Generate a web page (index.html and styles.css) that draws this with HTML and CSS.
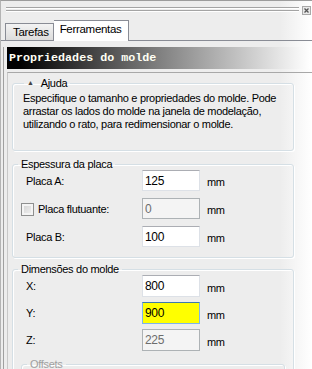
FILE: index.html
```html
<!DOCTYPE html>
<html lang="pt">
<head>
    <meta charset="UTF-8">
    <title>Propriedades do molde</title>
    <link rel="stylesheet" href="styles.css">
</head>
<body>
    <div class="caption">
        <div class="grip"></div>
        <span class="close">
            <svg width="9" height="9" viewBox="0 0 9 9">
                <rect x="0.5" y="0.5" width="8" height="8" fill="#e8e8e8" stroke="#a8a8a8"/>
                <path d="M2.5 2.5 L6.5 6.5 M6.5 2.5 L2.5 6.5" stroke="#555" stroke-width="1.3"/>
            </svg>
        </span>
    </div>

    <div class="tabs">
        <div class="tab">Tarefas</div>
        <div class="tab active">Ferramentas</div>
    </div>

    <div class="tab-panel">
        <div class="title">Propriedades do molde</div>

        <div class="props">
            <fieldset class="group help">
                <legend><span class="arrow">&#9650;</span>Ajuda</legend>
                <p>Especifique o tamanho e propriedades do molde. Pode arrastar os lados do molde na janela de modelação, utilizando o rato, para redimensionar o molde.</p>
            </fieldset>

            <fieldset class="group thick">
                <legend>Espessura da placa</legend>
                <div class="row">
                    <label>Placa A:</label>
                    <input type="text" value="125">
                    <span class="unit">mm</span>
                </div>
                <div class="row">
                    <label class="check"><input type="checkbox">Placa flutuante:</label>
                    <input type="text" value="0" disabled>
                    <span class="unit">mm</span>
                </div>
                <div class="row">
                    <label>Placa B:</label>
                    <input type="text" value="100">
                    <span class="unit">mm</span>
                </div>
            </fieldset>

            <fieldset class="group dims">
                <legend>Dimensões do molde</legend>
                <div class="row">
                    <label>X:</label>
                    <input type="text" value="800">
                    <span class="unit">mm</span>
                </div>
                <div class="row">
                    <label>Y:</label>
                    <input type="text" class="focus" value="900">
                    <span class="unit">mm</span>
                </div>
                <div class="row">
                    <label>Z:</label>
                    <input type="text" value="225" disabled>
                    <span class="unit">mm</span>
                </div>
                <fieldset class="group offsets">
                    <legend>Offsets</legend>
                </fieldset>
            </fieldset>
        </div>
    </div>
</body>
</html>
```

FILE: styles.css
```css
html, body {
    margin: 0;
    padding: 0;
}

body {
    width: 312px;
    height: 369px;
    overflow: hidden;
    box-sizing: border-box;
    border-top: 1px solid #9c9c9c;
    border-left: 1px solid #b4b4b4;
    font-family: "Liberation Sans", Arial, sans-serif;
    font-size: 11px;
    letter-spacing: -0.3px;
    color: #000;
    background: linear-gradient(to right, #ededed 0, #ededed 280px, #fff 312px);
}

/* barra de arrasto */
.caption {
    height: 18px;
    display: flex;
    align-items: center;
    padding: 0 1px 0 5px;
}

.grip {
    flex: 1;
    height: 6px;
    margin-right: 3px;
    background: linear-gradient(#a4a4a4 0 1px, #fff 1px 2px, transparent 2px 3px, #a4a4a4 3px 4px, #fff 4px 5px, transparent 5px);
}

.close {
    width: 9px;
    height: 9px;
    display: block;
    margin-top: 1px;
}

.close svg {
    display: block;
}

/* separadores */
.tabs {
    display: flex;
    align-items: flex-end;
    height: 21px;
    padding-left: 4px;
    border-bottom: 1px solid #898c95;
}

.tab {
    height: 15px;
    padding: 1px 4px 0 7px;
    border: 1px solid #898c95;
    border-bottom: none;
    background: linear-gradient(#f3f3f3, #dcdcdc);
    line-height: 14px;
    font-size: 11.5px;
}

.tab.active {
    height: 20px;
    margin-bottom: -1px;
    padding: 0 6px 0 6px;
    border-left: none;
    background: #fff;
    line-height: 16px;
}

.tab-panel {
    margin-left: 2px;
    border-left: 1px solid #a0a0a0;
    height: 330px;
}

.title {
    margin: 6px 2px 0 3px;
    height: 22px;
    padding-left: 2px;
    background: linear-gradient(to right, #000 4%, #7a7a7a 48%, #fff 100%);
    color: #fffff4;
    font-family: "Liberation Mono", "Courier New", monospace;
    font-weight: bold;
    font-size: 11.7px;
    letter-spacing: 0;
    line-height: 23px;
}

.props {
    margin: 3px 0 0 3px;
    border-top: 1px solid #a8a8a8;
    border-left: 1px solid #c8c8c8;
    padding: 3px 0 0 4px;
}

.group {
    width: 280px;
    margin: 0;
    padding: 0;
    min-width: 0;
    border: 1px solid #d5dfe5;
    border-radius: 3px;
    box-shadow: inset 1px 1px 0 #fff, 1px 1px 0 #fff;
}

.group legend {
    padding: 0 3px;
    margin-left: 5px;
    line-height: 13px;
}

.help legend {
    margin-left: 11px;
}

.arrow {
    font-size: 7px;
    color: #444;
    margin-right: 7px;
    vertical-align: 2px;
}

.help p {
    margin: 2px 0 0;
    padding: 0 4px 19px 10px;
    line-height: 13px;
}

.thick {
    margin-top: 7px;
    padding: 0 0 3px;
}

.dims {
    margin-top: 5px;
    padding: 1px 0 0;
    height: 140px;
}

.row {
    display: flex;
    align-items: center;
    height: 21px;
    margin-bottom: 7px;
    padding-left: 13px;
}

.group legend + .row {
    margin-top: -2px;
}

.thick legend + .row {
    margin-top: -1px;
}

.dims .row {
    height: 22px;
    margin-bottom: 5px;
}

.row label {
    width: 116px;
    flex: none;
}

.row label.check {
    display: flex;
    align-items: center;
    width: 121px;
    margin-left: -5px;
}

.row input[type="text"] {
    width: 58px;
    height: 100%;
    box-sizing: border-box;
    margin: 0;
    padding: 0 2px;
    border: 1px solid #dde1e7;
    border-top-color: #abadb3;
    background: #fff;
    font-family: "Liberation Sans", Arial, sans-serif;
    font-size: 12px;
    letter-spacing: -0.3px;
    color: #000;
    outline: none;
}

.row input[type="text"]:disabled {
    background: #f4f4f4;
    border-color: #adb2b5;
    color: #6d6d6d;
}

.row input.focus {
    background: #ffff00;
    border-color: #7eb4ea;
    border-top-color: #3d7bad;
}

.check input {
    -webkit-appearance: none;
    appearance: none;
    width: 13px;
    height: 13px;
    margin: 1px 4px 0 0;
    border: 1px solid #8e8f8f;
    background: linear-gradient(135deg, #d0d0d0, #f4f4f4);
    box-shadow: inset 0 0 0 2px #f4f4f4;
}

.unit {
    margin-left: 7px;
    padding-top: 3px;
}

.offsets {
    margin: 7px 0 0 8px;
    width: 262px;
    height: 30px;
    color: #a0a0a0;
}
```
